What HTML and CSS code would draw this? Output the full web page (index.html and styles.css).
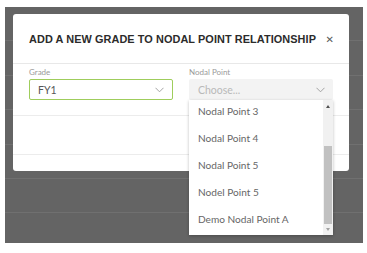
FILE: index.html
```html
<!DOCTYPE html>
<html>
<head>
<meta charset="utf-8">
<link rel="stylesheet" href="styles.css">
</head>
<body>
<div class="page">
  <div class="backdrop">
    <div class="rows">
      <div class="row"></div><div class="row"></div><div class="row"></div>
      <div class="row"></div><div class="row"></div><div class="row"></div>
    </div>
    <div class="modal">
      <div class="modal-header">
        <h2 class="title">ADD A NEW GRADE TO NODAL POINT RELATIONSHIP</h2>
        <span class="close">&#x2715;</span>
      </div>
      <div class="modal-body">
        <div class="field">
          <label class="label">Grade</label>
          <div class="select select-active">
            <span class="value">FY1</span>
            <svg class="chev" width="9" height="6" viewBox="0 0 9 6"><path d="M0.5 0.8 L4.5 4.8 L8.5 0.8" fill="none" stroke="#9a9a9a" stroke-width="0.9"/></svg>
          </div>
        </div>
        <div class="field">
          <label class="label">Nodal Point</label>
          <div class="select select-empty">
            <span class="placeholder">Choose...</span>
            <svg class="chev" width="9" height="6" viewBox="0 0 9 6"><path d="M0.5 0.8 L4.5 4.8 L8.5 0.8" fill="none" stroke="#9a9a9a" stroke-width="0.9"/></svg>
          </div>
          <div class="dropdown">
            <ul class="options">
              <li>Nodal Point 3</li>
              <li>Nodal Point 4</li>
              <li>Nodal Point 5</li>
              <li>Nodel Point 5</li>
              <li>Demo Nodal Point A</li>
            </ul>
            <div class="scrollbar">
              <span class="arrow arrow-up"></span>
              <span class="thumb"></span>
              <span class="arrow arrow-down"></span>
            </div>
          </div>
        </div>
      </div>
      <div class="modal-extra"></div>
    </div>
  </div>
</div>
</body>
</html>
```

FILE: styles.css
```css
* { box-sizing: border-box; }
html, body { margin: 0; padding: 0; background: #ffffff; }
body { font-family: Lato, "Open Sans", sans-serif; }

.page {
  width: 367px;
  height: 253px;
  padding: 7px 4px 10px 5px;
}

.backdrop {
  position: relative;
  width: 358px;
  height: 236px;
  background: #646464;
  overflow: hidden;
}

.rows { display: flex; flex-direction: column; }
.row {
  height: 34.4px;
  border-bottom: 1px solid #707070;
}

.modal {
  position: absolute;
  left: 8px;
  top: 7px;
  width: 336px;
  height: 157px;
  background: #ffffff;
  border-radius: 3px;
  display: flex;
  flex-direction: column;
}

.modal-header {
  height: 50px;
  display: flex;
  align-items: center;
  justify-content: space-between;
  padding: 1px 15px 0 16px;
  border-bottom: 1px solid #e8e8e8;
}

.title {
  margin: 0;
  font-family: "Liberation Sans", Arial, sans-serif;
  font-weight: bold;
  font-size: 10.9px;
  color: #2b2b2b;
  letter-spacing: 0.08px;
}

.close {
  font-family: "DejaVu Sans", sans-serif;
  font-size: 10px;
  color: #5a5a5a;
}

.modal-body {
  display: flex;
  gap: 16px;
  padding: 3px 16px 15px 16px;
  border-bottom: 1px solid #ececec;
}

.field {
  position: relative;
  width: 144px;
  display: flex;
  flex-direction: column;
}

.label {
  font-size: 8px;
  line-height: 10px;
  color: #9a9a9a;
  margin-bottom: 2px;
}

.select {
  height: 21px;
  border-radius: 2px;
  display: flex;
  align-items: center;
  justify-content: space-between;
  padding: 0 8px 0 9px;
  font-size: 10.5px;
}

.select-active {
  border: 1px solid #9fcd5c;
  padding-left: 8px;
}

.value { color: #555; }

.select-empty { background: #f3f3f3; }

.placeholder { color: #b9b9b9; }

.chev { display: block; }

.modal-extra {
  height: 39px;
  border-bottom: 1px solid #ececec;
}

.dropdown {
  position: absolute;
  top: 33px;
  left: 0;
  width: 144px;
  height: 135px;
  background: #ffffff;
  box-shadow: 0 1px 3px rgba(0,0,0,0.25);
  display: flex;
  overflow: hidden;
  z-index: 2;
}

.options {
  list-style: none;
  margin: -2px 0 0 0;
  padding: 0;
  flex: 1;
}

.options li {
  height: 27px;
  line-height: 27px;
  padding-left: 9px;
  font-size: 10.1px;
  color: #666;
}

.scrollbar {
  width: 10px;
  background: #f1f1f1;
  display: flex;
  flex-direction: column;
  align-items: center;
}

.arrow {
  width: 0;
  height: 0;
  border-left: 2.5px solid transparent;
  border-right: 2.5px solid transparent;
}

.arrow-up {
  margin-top: 5px;
  border-bottom: 3px solid #505050;
}

.thumb {
  width: 8px;
  height: 78px;
  margin-top: 38px;
  background: #c1c1c1;
}

.arrow-down {
  margin-top: 4px;
  border-top: 3px solid #a3a3a3;
}
```
